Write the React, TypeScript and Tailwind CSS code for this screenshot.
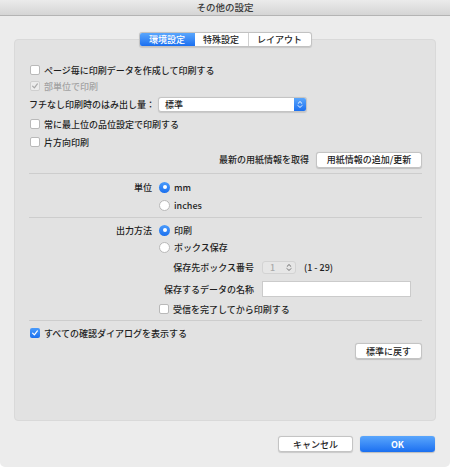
import React from 'react'

const font = { fontFamily: '"Noto Sans CJK JP", "Noto Sans", sans-serif' }

function CheckMark({ color }: { color: string }) {
  return (
    <svg viewBox="0 0 10 10" className="w-[8px] h-[8px]">
      <path d="M2 5.2 L4.2 7.4 L8 2.4" fill="none" stroke={color} strokeWidth="1.5" strokeLinecap="round" strokeLinejoin="round" />
    </svg>
  )
}

function Checkbox({ state }: { state: 'off' | 'disabled' | 'on' }) {
  if (state === 'on') {
    return (
      <span className="flex items-center justify-center w-[10px] h-[10px] rounded-[2px] bg-gradient-to-b from-[#4a9bfb] to-[#1b70ee] shrink-0">
        <CheckMark color="#ffffff" />
      </span>
    )
  }
  return (
    <span className={`flex items-center justify-center w-[10px] h-[10px] rounded-[2px] border shrink-0 ${state === 'disabled' ? 'bg-[#ececec] border-[#cfcfcf]' : 'bg-white border-[#b9b9b9]'}`}>
      {state === 'disabled' && <CheckMark color="#a8a8a8" />}
    </span>
  )
}

function Radio({ on }: { on?: boolean }) {
  if (on) {
    return (
      <span className="flex items-center justify-center w-[11px] h-[11px] rounded-full bg-gradient-to-b from-[#4a9bfb] to-[#1b70ee] shrink-0">
        <span className="w-[4px] h-[4px] rounded-full bg-white" />
      </span>
    )
  }
  return <span className="w-[11px] h-[11px] rounded-full bg-white border border-[#b9b9b9] shrink-0" />
}

function UpDown({ color, size = 8 }: { color: string; size?: number }) {
  return (
    <svg viewBox="0 0 8 12" style={{ width: size * 0.67, height: size }}>
      <path d="M1.5 4.5 L4 2 L6.5 4.5 M1.5 7.5 L4 10 L6.5 7.5" fill="none" stroke={color} strokeWidth="1.3" strokeLinecap="round" strokeLinejoin="round" />
    </svg>
  )
}

function Button({ children, className = '' }: { children: React.ReactNode; className?: string }) {
  return (
    <div className={`flex items-center justify-center h-[16px] rounded-[3px] bg-white border border-[#c4c4c4] shadow-[0_0.5px_1px_rgba(0,0,0,0.15)] text-[9px] text-[#1e1e1e] ${className}`}>
      {children}
    </div>
  )
}

export default function App() {
  return (
    <div style={font} className="w-[450px] h-[467px] bg-[#ececec] rounded-b-[5px] overflow-hidden text-[9px] leading-none text-[#1e1e1e] font-medium flex flex-col">
      {/* title bar */}
      <div className="h-[16px] shrink-0 flex items-center justify-center bg-gradient-to-b from-[#ebebeb] to-[#d5d5d5] border-b border-[#b4b4b4] text-[9.5px] text-[#3a3a3a]">
        その他の設定
      </div>

      {/* panel */}
      <div className="mt-[23px] mx-[14px] h-[382px] rounded-[4px] bg-[#e2e2e2] border border-[#d9d9d9] pl-[14px] pr-[13px] flex flex-col">
        {/* tabs */}
        <div className="flex justify-center -mt-[8px] ml-[-14px] mr-[-13px] pl-[0px]">
          <div className="flex h-[15px] rounded-[3px] border border-[#c2c2c2] bg-white shadow-[0_0.5px_1px_rgba(0,0,0,0.12)] overflow-hidden text-[9px]">
            <div className="w-[55px] flex items-center justify-center bg-gradient-to-b from-[#5aa6fc] to-[#1a6ff0] text-white">環境設定</div>
            <div className="w-[54px] flex items-center justify-center border-r border-[#d0d0d0]">特殊設定</div>
            <div className="w-[62px] flex items-center justify-center">レイアウト</div>
          </div>
        </div>

        <div className="h-[15px]" />

        <div className="flex items-center h-[16px] pl-[1px] gap-[4px]">
          <Checkbox state="off" />
          <span>ページ毎に印刷データを作成して印刷する</span>
        </div>
        <div className="flex items-center h-[16px] pl-[1px] gap-[4px] text-[#a3a3a3]">
          <Checkbox state="disabled" />
          <span>部単位で印刷</span>
        </div>
        <div className="flex items-center h-[21px] gap-[3px]">
          <span>フチなし印刷時のはみ出し量：</span>
          <div className="flex h-[15px] w-[149px] rounded-[3px] bg-white border border-[#c4c4c4] shadow-[0_0.5px_1px_rgba(0,0,0,0.12)] overflow-hidden">
            <span className="flex-1 flex items-center pl-[6px]">標準</span>
            <span className="w-[12px] flex items-center justify-center bg-gradient-to-b from-[#5aa6fc] to-[#1a6ff0]">
              <UpDown color="#ffffff" size={9} />
            </span>
          </div>
        </div>
        <div className="flex items-center h-[18px] pl-[1px] gap-[4px]">
          <Checkbox state="off" />
          <span>常に最上位の品位設定で印刷する</span>
        </div>
        <div className="flex items-center h-[18px] pl-[1px] gap-[4px]">
          <Checkbox state="off" />
          <span>片方向印刷</span>
        </div>
        <div className="flex items-center justify-end h-[17px] gap-[7px]">
          <span>最新の用紙情報を取得</span>
          <Button className="w-[106px]">用紙情報の追加/更新</Button>
        </div>

        <div className="mt-[5px] h-px bg-[#cdcdcd]" />

        <div className="mt-[4px] grid grid-cols-[123px_1fr] gap-x-[7px]">
          <span className="h-[18px] flex items-center justify-end">単位</span>
          <div className="h-[18px] flex items-center gap-[4px]"><Radio on /><span>mm</span></div>
          <span />
          <div className="h-[18px] flex items-center gap-[4px]"><Radio /><span>inches</span></div>
        </div>

        <div className="mt-[3px] h-px bg-[#cdcdcd]" />

        <div className="mt-[3px] grid grid-cols-[123px_1fr] gap-x-[7px]">
          <span className="h-[18px] flex items-center justify-end">出力方法</span>
          <div className="h-[18px] flex items-center gap-[4px]"><Radio on /><span>印刷</span></div>
          <span />
          <div className="h-[16px] flex items-center gap-[4px]"><Radio /><span>ボックス保存</span></div>
        </div>

        <div className="grid grid-cols-[225px_1fr] gap-x-[8px]">
          <span className="h-[24px] flex items-center justify-end">保存先ボックス番号</span>
          <div className="h-[24px] flex items-center gap-[8px]">
            <div className="flex items-center w-[34px] h-[13px] rounded-[3px] border border-[#d3d3d3] bg-[#e6e6e6]">
              <span className="flex-1 pl-[7px] text-[#a9a9a9]">1</span>
              <span className="w-[11px] flex items-center justify-center"><UpDown color="#6a6a6a" size={9} /></span>
            </div>
            <span>(1 - 29)</span>
          </div>
          <span className="h-[20px] flex items-center justify-end">保存するデータの名称</span>
          <div className="h-[20px] flex items-center">
            <div className="w-[149px] h-[16px] bg-white border border-[#cbcbcb]" />
          </div>
        </div>
        <div className="h-[20px] flex items-center gap-[4px] pl-[130px]">
          <Checkbox state="off" />
          <span>受信を完了してから印刷する</span>
        </div>

        <div className="mt-px h-px bg-[#cdcdcd]" />

        <div className="mt-[3px] flex items-center h-[18px] pl-[1px] gap-[4px]">
          <Checkbox state="on" />
          <span>すべての確認ダイアログを表示する</span>
        </div>
        <div className="mt-px flex justify-end">
          <Button className="w-[67px]">標準に戻す</Button>
        </div>
      </div>

      {/* bottom buttons */}
      <div className="mt-[15px] mr-[15px] flex justify-end gap-[7px]">
        <Button className="w-[75px]">キャンセル</Button>
        <div className="w-[75px] h-[16px] flex items-center justify-center rounded-[3px] bg-gradient-to-b from-[#5aa6fc] to-[#1a6ff0] text-white text-[9px] font-bold shadow-[0_0.5px_1px_rgba(0,0,0,0.2)]">
          OK
        </div>
      </div>
    </div>
  )
}
